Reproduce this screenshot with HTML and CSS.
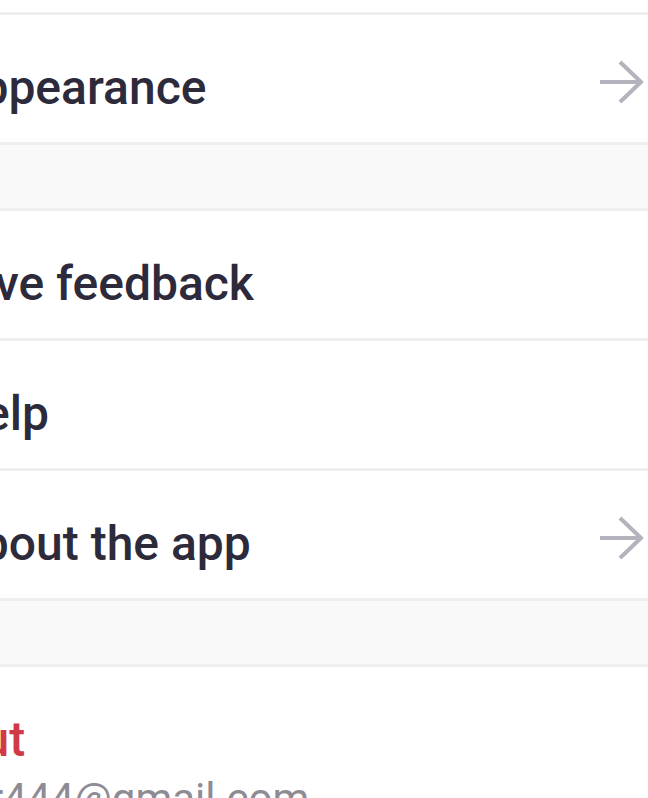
FILE: index.html
```html
<!DOCTYPE html>
<html lang="en">
<head>
<meta charset="utf-8">
<title>Settings</title>
<link rel="stylesheet" href="styles.css">
</head>
<body>
<div class="screen">
  <div class="top-gap"></div>
  <div class="group">
    <div class="row">
      <span class="label">Appearance</span>
      <svg class="arrow" width="46" height="46" viewBox="0 0 46 46"><path d="M1 23H43M21 3L42 23L21 43" fill="none" stroke="currentColor" stroke-width="4"/></svg>
    </div>
  </div>
  <div class="spacer"></div>
  <div class="group">
    <div class="row"><span class="label">Give feedback</span></div>
    <div class="row"><span class="label">Help</span></div>
    <div class="row">
      <span class="label">About the app</span>
      <svg class="arrow" width="46" height="46" viewBox="0 0 46 46"><path d="M1 23H43M21 3L42 23L21 43" fill="none" stroke="currentColor" stroke-width="4"/></svg>
    </div>
  </div>
  <div class="spacer"></div>
  <div class="group logout">
    <div class="logout-title">Log out</div>
    <div class="logout-email">user444@gmail.com</div>
  </div>
</div>
</body>
</html>
```
FILE: styles.css
```css
html, body {
  margin: 0;
  padding: 0;
  background: #ffffff;
  overflow: hidden;
}
.screen {
  width: 648px;
  font-family: Roboto, "Noto Sans", sans-serif;
  color: #2c2a3b;
}
.top-gap {
  height: 12px;
  background: #ffffff;
}
.group {
  border-top: 3px solid #eeeeee;
  border-bottom: 3px solid #eeeeee;
  background: #ffffff;
}
.row {
  height: 127px;
  display: flex;
  align-items: center;
  justify-content: space-between;
  padding: 6px 3px 0 0;
  box-sizing: border-box;
}
.row + .row {
  border-top: 3px solid #eeeeee;
  height: 130px;
}
.label {
  font-size: 48px;
  font-weight: 500;
  margin-left: -50px;
  padding-top: 12px;
  white-space: nowrap;
}
.arrow {
  color: #b4b2bc;
  flex: none;
}
.spacer {
  height: 63px;
  background: #f9f9f9;
}
.spacer + .group {
  border-top: 3px solid #eeeeee;
}
.logout {
  border-bottom: none;
  padding-top: 46px;
  white-space: nowrap;
}
.logout-title {
  font-size: 48px;
  font-weight: 500;
  color: #d13a45;
  line-height: 54px;
  margin-left: -137px;
}
.logout-email {
  font-size: 42px;
  font-weight: 400;
  color: #8d8c95;
  line-height: 48px;
  margin-top: 8px;
  margin-left: -78px;
}
```
